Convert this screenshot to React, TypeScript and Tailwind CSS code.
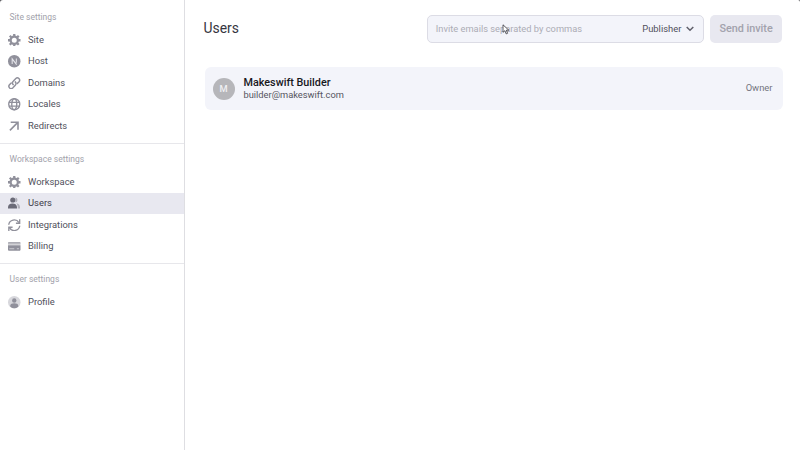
import type { ReactNode } from 'react';

const GearIcon = () => (
  <svg viewBox="0 0 12 12" className="size-[12.5px]">
    <circle cx="6" cy="6" r="3.5" fill="none" stroke="currentColor" strokeWidth="2.2" />
    <path
      d="M6 0v2M6 10v2M0 6h2M10 6h2M1.700 1.700l1.400 1.400M8.900 8.900l1.400 1.400M1.700 10.300l1.400-1.400M8.900 3.100l1.400-1.400"
      stroke="currentColor"
      strokeWidth="2.2"
    />
  </svg>
);

const HostIcon = () => (
  <svg viewBox="0 0 12 12" className="size-[12.5px]">
    <circle cx="6" cy="6" r="6" fill="currentColor" />
    <path d="M4 8.600V3.700l4.300 5.500M8 3.400v4" fill="none" stroke="#e6e6eb" strokeWidth="1" />
  </svg>
);

const LinkIcon = () => (
  <svg viewBox="0 0 12 12" className="size-[12.5px]">
    <g fill="none" stroke="currentColor" strokeWidth="1.4" strokeLinecap="round">
      <path d="M5 7.300a2.300 2.300 0 0 1 0-3.300L7.500 1.400a2.200 2.200 0 0 1 3.100 3.100L8.900 6.300" />
      <path d="M7 4.700a2.300 2.300 0 0 1 0 3.300L4.500 10.600a2.200 2.200 0 0 1-3.100-3.100L3.100 5.700" />
    </g>
  </svg>
);

const GlobeIcon = () => (
  <svg viewBox="0 0 12 12" className="size-[12.5px]">
    <g fill="none" stroke="currentColor" strokeWidth="1.3">
      <circle cx="6" cy="6" r="5.3" />
      <ellipse cx="6" cy="6" rx="2.4" ry="5.3" />
      <path d="M1 4.200h10M1 7.800h10" />
    </g>
  </svg>
);

const ArrowIcon = () => (
  <svg viewBox="0 0 12 12" className="size-3">
    <path d="M2.700 2.200h7.300v7.600M9.800 2.400L1.900 10.400" fill="none" stroke="currentColor" strokeWidth="1.6" />
  </svg>
);

const UsersIcon = () => (
  <svg viewBox="0 0 12 12" className="size-3">
    <g fill="currentColor">
      <g opacity=".45">
        <path d="M7.500.5a2.500 2.500 0 0 1 0 4.900z" />
        <path d="M8.300 6.300c2.300.2 3.700 1.700 3.700 4v1.300H9.700v-1.500c0-1.600-.5-2.800-1.400-3.800z" />
      </g>
      <circle cx="4.800" cy="3" r="2.600" />
      <path d="M0 11.600v-1.400c0-2.300 1.700-3.800 4.500-3.800S9 7.900 9 10.200v1.400z" />
    </g>
  </svg>
);

const SyncIcon = () => (
  <svg viewBox="0 0 12 12" className="size-[12.5px]">
    <g fill="none" stroke="currentColor" strokeWidth="1.3">
      <path d="M.7 5.500A5.300 5.300 0 0 1 10.500 3.500M11.300 6.500A5.300 5.300 0 0 1 1.500 8.500" />
      <path d="M11.200.300v3.800H7.600M.8 11.700V7.900h3.600" />
    </g>
  </svg>
);

const CardIcon = () => (
  <svg viewBox="0 0 12 12" className="size-[12.5px]">
    <path d="M.6 1.900h10.800l.6.600v1H0v-1z" fill="currentColor" opacity=".75" />
    <path d="M0 5h12v4.600l-.6.600H.6L0 9.600z" fill="currentColor" />
    <path d="M0 4.200h12" stroke="currentColor" strokeWidth="1.400" opacity=".4" />
    <path d="M1.300 8.400h4.700M8.500 8.400h2" stroke="#d9d9df" strokeWidth=".8" />
  </svg>
);

const ProfileIcon = () => (
  <svg viewBox="0 0 12 12" className="size-[12.5px]">
    <circle cx="6" cy="6" r="6" fill="#d7d7dc" />
    <circle cx="6" cy="4.300" r="2.100" fill="currentColor" />
    <path d="M2.200 10.300V9.200C2.200 7.800 4 7 6 7s3.800.8 3.800 2.200v1.100A6 6 0 0 1 2.200 10.300z" fill="currentColor" />
  </svg>
);

interface ItemProps {
  icon: ReactNode;
  label: string;
  active?: boolean;
}

function Item({ icon, label, active = false }: ItemProps) {
  return (
    <li
      className={`flex h-[21.5px] items-center pl-2 text-[9.4px] ${
        active ? 'bg-[#e8e8f0] text-[#3c3c48]' : 'text-[#50505b]'
      }`}
    >
      <span className={`w-5 shrink-0 ${active ? 'text-[#6b6b78]' : 'text-[#90909b]'}`}>{icon}</span>
      {label}
    </li>
  );
}

function Section({ title, children }: { title: string; children: ReactNode }) {
  return (
    <section className="border-b border-[#e7e7eb] pb-[6px] last:border-b-0">
      <h2 className="h-[27.5px] pt-[7px] pl-[9.5px] text-[8.5px] leading-4 text-[#a2a2ab]">{title}</h2>
      <ul>{children}</ul>
    </section>
  );
}

export default function App() {
  return (
    <div className="relative flex h-[450px] w-[800px] overflow-hidden bg-white font-['Roboto',sans-serif]">
      <aside className="w-[185px] shrink-0 border-r border-[#dedee2] pt-[1.7px]">
        <Section title="Site settings">
          <Item icon={<GearIcon />} label="Site" />
          <Item icon={<HostIcon />} label="Host" />
          <Item icon={<LinkIcon />} label="Domains" />
          <Item icon={<GlobeIcon />} label="Locales" />
          <Item icon={<ArrowIcon />} label="Redirects" />
        </Section>
        <Section title="Workspace settings">
          <Item icon={<GearIcon />} label="Workspace" />
          <Item icon={<UsersIcon />} label="Users" active />
          <Item icon={<SyncIcon />} label="Integrations" />
          <Item icon={<CardIcon />} label="Billing" />
        </Section>
        <Section title="User settings">
          <Item icon={<ProfileIcon />} label="Profile" />
        </Section>
      </aside>

      <main className="flex-1 pt-[15px] pr-[17.5px] pl-[18.5px]">
        <header className="flex h-7 items-center pr-[0.7px]">
          <h1 className="flex-1 pb-px text-[13.9px] text-[#35353f]">Users</h1>
          <div className="flex h-7 w-[277px] items-center rounded-[5px] border border-[#dcdce5] bg-[#f3f4fa] pr-[9px] pl-[7.5px]">
            <span className="flex-1 text-[9.3px] text-[#acacb5]">Invite emails separated by commas</span>
            <span className="text-[9.4px] text-[#50505b]">Publisher</span>
            <svg viewBox="0 0 8 6" className="ml-[5px] h-[6px] w-2">
              <path d="M.7 1L4 4.300 7.300 1" fill="none" stroke="#60606b" strokeWidth="1.500" />
            </svg>
          </div>
          <button className="ml-[6px] h-7 w-[71.5px] rounded-[5px] bg-[#e8e8f0] text-[10.8px] font-medium text-[#a2a2ac]">
            Send invite
          </button>
        </header>

        <div className="mt-6 ml-px flex h-[43px] items-center rounded-[6px] bg-[#f3f4fa] pr-[10px] pl-2">
          <div className="flex size-[22px] items-center justify-center rounded-full bg-[#b6b6ba] text-[9.3px] font-medium text-[#f0f0f3]">
            M
          </div>
          <div className="ml-[9px] flex-1">
            <div className="text-[10.8px] leading-[13px] font-medium text-[#18181d]">Makeswift Builder</div>
            <div className="text-[9.3px] leading-[12px] text-[#555560]">builder@makeswift.com</div>
          </div>
          <span className="text-[9.4px] text-[#74747e]">Owner</span>
        </div>
      </main>

      <svg viewBox="0 0 8 11" className="absolute top-[24px] left-[502px] h-[11px] w-2">
        <path d="M1 .8v7.500l1.900-1.600 1.300 3.200 1.400-.6-1.300-3.100h2.500z" fill="#fff" stroke="#33333b" strokeWidth=".8" />
      </svg>
      <svg viewBox="0 0 4 4" className="absolute top-0 left-0 size-1">
        <path d="M0 0h3A3 3 0 0 0 0 3z" fill="#55555a" />
      </svg>
      <svg viewBox="0 0 4 4" className="absolute top-0 right-0 size-1">
        <path d="M4 0H2a2 2 0 0 1 2 2z" fill="#55555a" />
      </svg>
    </div>
  );
}
